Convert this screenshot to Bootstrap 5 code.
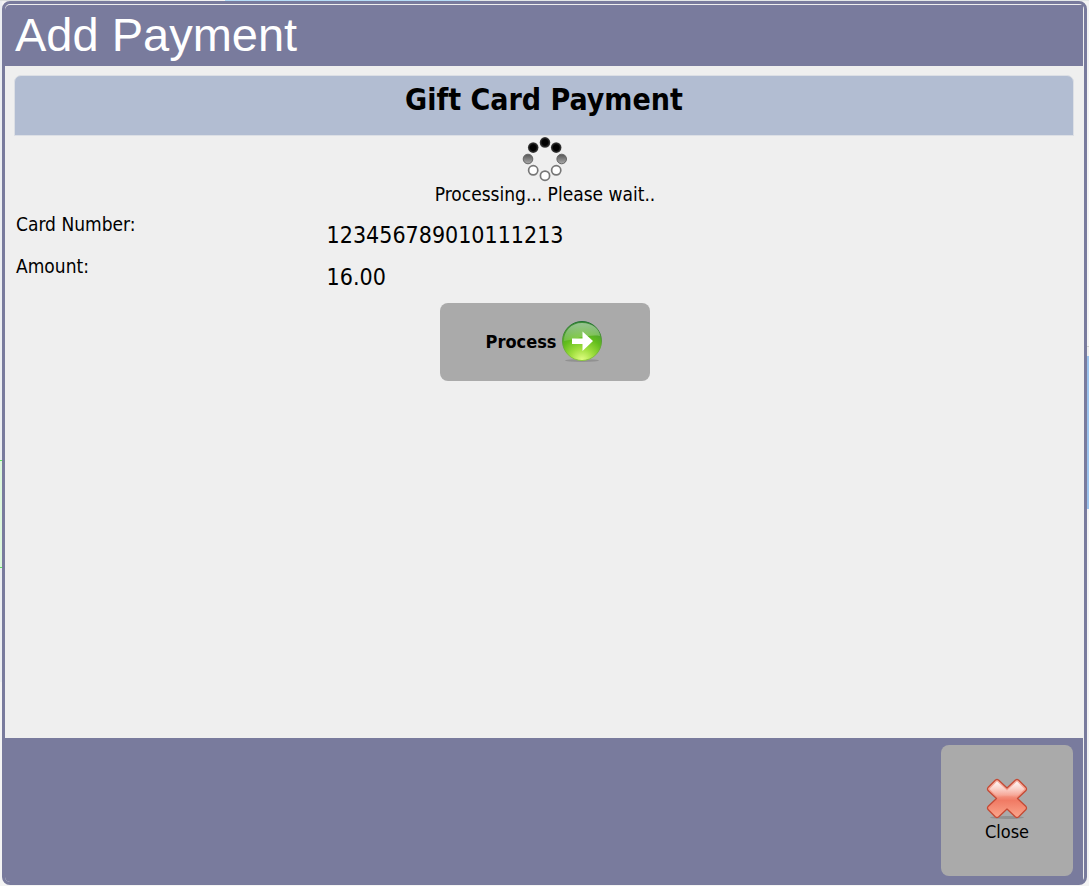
<!DOCTYPE html>
<html lang="en">
<head>
<meta charset="utf-8">
<meta name="viewport" content="width=device-width, initial-scale=1">
<title>Add Payment</title>
<link href="https://cdn.jsdelivr.net/npm/bootstrap@5.3.0/dist/css/bootstrap.min.css" rel="stylesheet">
<style>
  :root { --frame: #797b9d; --panel: #efefef; --button: #aaaaaa; }
  body {
    font-family: "DejaVu Sans Condensed", "DejaVu Sans", sans-serif;
    font-size: 19px;
    line-height: 24px;
    color: #000;
    padding: 1px 2px;
    /* edges of the page that lies behind the dialog */
    background:
      linear-gradient(90deg, #dcdfdf 110px, #f4f4f4 110px 225px, #b5dcf7 225px 470px, #e4e8e8 470px) top / 100% 1px no-repeat,
      linear-gradient(#eceef2 460px, #5ee65e 460px 461px, #ddf7dd 461px 567px, #5ee65e 567px 568px, #eceef2 568px 682px, #f4f4f4 682px) left / 2px 100% no-repeat,
      linear-gradient(#f4f4f4 346px, #d0d0d0 346px 347px, #f0f0f0 347px 356px, #9dc4ee 356px 509px, #f4f4f4 509px) right / 2px 100% no-repeat,
      #f4f4f4;
  }
  .dialog-frame { border: 3px solid var(--frame); border-radius: 8px; background: var(--panel); padding: 1px 1px 0 0; }
  .dialog-title { background: var(--frame); color: #fff; border-radius: 5px 0 0 0; padding: 0 10px 2px; font: 47px/59px "Liberation Sans", Arial, sans-serif; }
  .dialog-content { padding: 9px; }
  .section-title { background: #b2bdd2; border: 1px solid #dcdfe5; border-radius: 7px 7px 0 0; height: 61px; padding-top: 6px; font-size: 30px; line-height: 36px; font-weight: 700; }
  .progress-note { padding-left: 2px; }
  .details { display: grid; grid-template-columns: 5fr 12fr; padding: 1px 2px 0; }
  .details dt { font-weight: 400; padding-top: 5px; }
  .details dd { font-size: 23px; line-height: 28px; padding: 14px 0 0; margin: 0; }
  .tool-button, .tool-button:hover { background: var(--button); border: 0; border-radius: 8px; color: #000; font-size: 18px; line-height: 24px; }
  .process-button { width: 210px; height: 78px; }
  .close-button { width: 132px; height: 131px; }
  .dialog-actions { background: var(--frame); padding: 7px 10px 6px; border-radius: 0 0 0 5px; }
</style>
</head>
<body class="min-vh-100 d-flex flex-column">
<main class="dialog-frame flex-grow-1 d-flex flex-column" role="dialog" aria-labelledby="dialog-title">
  <h1 class="dialog-title m-0" id="dialog-title">Add Payment</h1>
  <div class="dialog-content flex-grow-1">
    <h2 class="section-title text-center m-0">Gift Card Payment</h2>
    <div class="progress-note text-center" role="status">
      <svg class="d-block mx-auto" width="46" height="46" viewBox="-23 -23 46 46" aria-hidden="true">
        <defs>
          <linearGradient id="dot-half" x2="0" y2="1"><stop offset="0" stop-color="#555"/><stop offset="1" stop-color="#aaa"/></linearGradient>
          <radialGradient id="dot-full"><stop offset=".55" stop-color="#000"/><stop offset="1" stop-color="#444"/></radialGradient>
        </defs>
        <g fill="url(#dot-full)"><circle cy="-16.6" r="5.3"/><circle cx="-11.8" cy="-11.4" r="5.3"/><circle cx="11.2" cy="-11.4" r="5.3"/></g>
        <g fill="url(#dot-half)" stroke="#666"><circle cx="-17" r="4.8"/><circle cx="16.7" r="4.8"/></g>
        <g fill="#fff" stroke="#777" stroke-width="1.7"><circle cx="-11.8" cy="11.3" r="4.6"/><circle cx="11.2" cy="11.3" r="4.6"/><circle cy="16.7" r="4.6"/></g>
      </svg>
      <div>Processing... Please wait..</div>
    </div>
    <dl class="details m-0">
      <dt>Card Number:</dt><dd>123456789010111213</dd>
      <dt>Amount:</dt><dd>16.00</dd>
    </dl>
    <div class="progress-note d-flex justify-content-center pt-2 mt-1">
      <button type="button" class="btn tool-button process-button fw-bold d-flex align-items-center justify-content-center gap-1 p-0">
        Process
        <svg width="44" height="44" viewBox="0 0 44 44" aria-hidden="true">
          <defs>
            <radialGradient id="green-ball" cx=".5" cy="1" r="1"><stop offset="0" stop-color="#e4ff86"/><stop offset=".3" stop-color="#a2e040"/><stop offset=".6" stop-color="#62bd1c"/><stop offset="1" stop-color="#3c8c3a"/></radialGradient>
            <linearGradient id="green-rim" x2="0" y2="1"><stop offset="0" stop-color="#236f34"/><stop offset="1" stop-color="#8cc83c"/></linearGradient>
            <linearGradient id="green-gloss" x2="0" y2="1"><stop offset="0" stop-color="#fff" stop-opacity=".45"/><stop offset="1" stop-color="#fff" stop-opacity=".15"/></linearGradient>
          </defs>
          <ellipse cx="22" cy="40.500" rx="17" ry="1.500" fill="#777" opacity=".5"/>
          <circle cx="22" cy="21" r="19.500" fill="url(#green-ball)" stroke="url(#green-rim)"/>
          <path d="M4 21C4 11 11 3 22 3s18 7 18 13C29 14 17 19 4 21z" fill="url(#green-gloss)"/>
          <path d="M12 18.500h10.500V11.500L33 21 22.500 31V24H12z" fill="#fff"/>
        </svg>
      </button>
    </div>
  </div>
  <footer class="dialog-actions d-flex justify-content-end">
    <button type="button" class="btn tool-button close-button d-flex flex-column align-items-center justify-content-center p-0">
      <svg width="44" height="42" viewBox="0 0 44 42" aria-hidden="true">
        <defs>
          <linearGradient id="cross-fill" x2="0" y2="1"><stop offset="0" stop-color="#f7b3a5"/><stop offset=".4" stop-color="#f59a88"/><stop offset=".55" stop-color="#f07a64"/><stop offset="1" stop-color="#fba68c"/></linearGradient>
          <linearGradient id="cross-gloss" x2="0" y2="1"><stop offset="0" stop-color="#fff" stop-opacity=".9"/><stop offset="1" stop-color="#fff" stop-opacity="0"/></linearGradient>
        </defs>
        <ellipse cx="22" cy="39.500" rx="17" ry="1.500" fill="#777" opacity=".5"/>
        <path d="M10.500 2Q12 1 13.500 2L22 10 30.500 2Q32 1 33.500 2L41 9.500Q42 11 41 12.500L32.500 20.500 41 28.500Q42 30 41 31.500L33.500 39Q32 40 30.500 39L22 31 13.500 39Q12 40 10.500 39L3 31.500Q2 30 3 28.500L11.500 20.500 3 12.500Q2 11 3 9.500z" fill="url(#cross-fill)" stroke="#c44a35" stroke-width="1.300" stroke-linejoin="round"/>
        <path d="M12 3.500 22 12.500l10-9L39.500 11 31 19.500Q22 17 13 19.500L4.500 11z" fill="url(#cross-gloss)"/>
      </svg>
      Close
    </button>
  </footer>
</main>
<script src="https://cdn.jsdelivr.net/npm/bootstrap@5.3.0/dist/js/bootstrap.bundle.min.js"></script>
</body>
</html>
